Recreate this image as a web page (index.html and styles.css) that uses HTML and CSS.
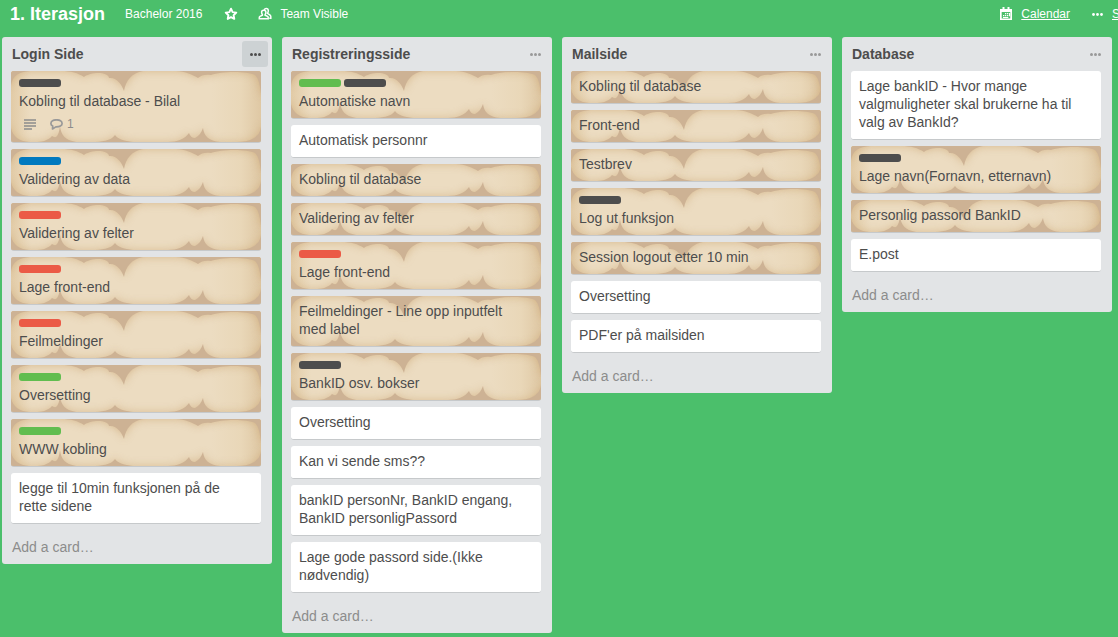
FILE: index.html
```html
<!DOCTYPE html>
<html lang="no">
<head>
<meta charset="utf-8">
<meta name="viewport" content="width=device-width, initial-scale=1">
<title>1. Iterasjon</title>
<link rel="stylesheet" href="styles.css">
</head>
<body>
<header class="board-header">
  <h1 class="board-name">1. Iterasjon</h1>
  <a class="board-link board-org" href="#">Bachelor 2016</a>
  <button class="icon-btn" type="button" aria-label="Star board">
    <svg width="14" height="14" viewBox="0 0 14 14"><path d="M7 1.700l1.600 3.400 3.700.5-2.700 2.600.7 3.700L7 10.100l-3.300 1.800.7-3.700L1.700 5.600l3.700-.5z" fill="none" stroke="#fff" stroke-width="1.900" stroke-linejoin="round"/></svg>
  </button>
  <button class="board-btn" type="button">
    <svg width="14" height="14" viewBox="0 0 14 14"><path d="M6.200 3C6.600 1.900 7.300 1.500 8.200 1.500c1.300 0 2.100.9 2.100 2.200 0 1-.3 1.900-.8 2.600l2.600 1.800c.5.400.7.900.7 1.500v1.600h-1.500" fill="none" stroke="#fff" stroke-width="1.500"/><path d="M5.700 3.200c-1.300 0-2.100.8-2.100 2.100 0 1 .3 1.600.8 2.200v.7L2 9.300c-.5.300-.7.600-.7 1.200v1.300h8.900v-1.300c0-.6-.2-.9-.7-1.200L7.100 8.200v-.7c.5-.6.8-1.200.8-2.200 0-1.300-.9-2.100-2.200-2.100z" fill="none" stroke="#fff" stroke-width="1.500"/></svg>
    <span>Team Visible</span>
  </button>
  <nav class="board-tools">
    <a class="board-tool" href="#">
      <svg width="14" height="14" viewBox="0 0 14 14"><path d="M1 2h12v11H1z M2.700 5v6.400h8.600V5z" fill="#fff" fill-rule="evenodd"/><path d="M3.500 0h2v3.500h-2z M8.500 0h2v3.500h-2z" fill="#fff"/><path d="M6 6h1.300v1.300H6z M8 6h1.300v1.300H8z M4 8h1.300v1.300H4z M6 8h1.300v1.300H6z M8 8h1.300v1.300H8z M10 6h1v3.300h-1z M4 10h5.300v1H4z" fill="#fff"/></svg>
      <span class="tool-text">Calendar</span>
    </a>
    <a class="board-tool board-menu" href="#">
      <svg width="11" height="3" viewBox="0 0 11 3"><g fill="#fff"><circle cx="1.500" cy="1.500" r="1.400"/><circle cx="5.500" cy="1.500" r="1.400"/><circle cx="9.500" cy="1.500" r="1.400"/></g></svg>
      <span class="tool-text">Show Menu</span>
    </a>
  </nav>
</header>

<main class="board">
  <section class="list">
    <header class="list-header">
      <h2 class="list-title">Login Side</h2>
      <button class="list-menu active" type="button" aria-label="List actions"><i class="dot"></i><i class="dot"></i><i class="dot"></i></button>
    </header>
    <div class="cards">
      <article class="card paper">
        <div class="labels"><span class="label black"></span></div>
        <p class="card-title">Kobling til database - Bilal</p>
        <div class="badges">
          <svg width="12" height="11" viewBox="0 0 12 11"><path d="M0 1h12M0 4h12M0 7h12M0 10h8" stroke="#8c8c8c" stroke-width="1.600"/></svg>
          <span class="badge">
            <svg width="13" height="11" viewBox="0 0 13 11"><path d="M6.500.8C3.300.8.9 2.300.9 4.400c0 1.200.7 2.100 1.800 2.700L2.500 10l3.300-2.100c3.800.2 6.300-1.300 6.300-3.500C12.100 2.300 9.700.8 6.500.8z" fill="none" stroke="#999" stroke-width="1.700" stroke-linejoin="round"/></svg>
            <span>1</span>
          </span>
        </div>
      </article>
      <article class="card paper"><div class="labels"><span class="label blue"></span></div><p class="card-title">Validering av data</p></article>
      <article class="card paper"><div class="labels"><span class="label red"></span></div><p class="card-title">Validering av felter</p></article>
      <article class="card paper"><div class="labels"><span class="label red"></span></div><p class="card-title">Lage front-end</p></article>
      <article class="card paper"><div class="labels"><span class="label red"></span></div><p class="card-title">Feilmeldinger</p></article>
      <article class="card paper"><div class="labels"><span class="label green"></span></div><p class="card-title">Oversetting</p></article>
      <article class="card paper"><div class="labels"><span class="label green"></span></div><p class="card-title">WWW kobling</p></article>
      <article class="card"><p class="card-title">legge til 10min funksjonen på de rette sidene</p></article>
    </div>
    <button class="add-card" type="button">Add a card…</button>
  </section>

  <section class="list">
    <header class="list-header">
      <h2 class="list-title">Registreringsside</h2>
      <button class="list-menu" type="button" aria-label="List actions"><i class="dot"></i><i class="dot"></i><i class="dot"></i></button>
    </header>
    <div class="cards">
      <article class="card paper"><div class="labels"><span class="label green"></span><span class="label black"></span></div><p class="card-title">Automatiske navn</p></article>
      <article class="card"><p class="card-title">Automatisk personnr</p></article>
      <article class="card paper"><p class="card-title">Kobling til database</p></article>
      <article class="card paper"><p class="card-title">Validering av felter</p></article>
      <article class="card paper"><div class="labels"><span class="label red"></span></div><p class="card-title">Lage front-end</p></article>
      <article class="card paper"><p class="card-title">Feilmeldinger - Line opp inputfelt med label</p></article>
      <article class="card paper"><div class="labels"><span class="label black"></span></div><p class="card-title">BankID osv. bokser</p></article>
      <article class="card"><p class="card-title">Oversetting</p></article>
      <article class="card"><p class="card-title">Kan vi sende sms??</p></article>
      <article class="card"><p class="card-title">bankID personNr, BankID engang, BankID personligPassord</p></article>
      <article class="card"><p class="card-title">Lage gode passord side.(Ikke nødvendig)</p></article>
    </div>
    <button class="add-card" type="button">Add a card…</button>
  </section>

  <section class="list">
    <header class="list-header">
      <h2 class="list-title">Mailside</h2>
      <button class="list-menu" type="button" aria-label="List actions"><i class="dot"></i><i class="dot"></i><i class="dot"></i></button>
    </header>
    <div class="cards">
      <article class="card paper"><p class="card-title">Kobling til database</p></article>
      <article class="card paper"><p class="card-title">Front-end</p></article>
      <article class="card paper"><p class="card-title">Testbrev</p></article>
      <article class="card paper"><div class="labels"><span class="label black"></span></div><p class="card-title">Log ut funksjon</p></article>
      <article class="card paper"><p class="card-title">Session logout etter 10 min</p></article>
      <article class="card"><p class="card-title">Oversetting</p></article>
      <article class="card"><p class="card-title">PDF'er på mailsiden</p></article>
    </div>
    <button class="add-card" type="button">Add a card…</button>
  </section>

  <section class="list">
    <header class="list-header">
      <h2 class="list-title">Database</h2>
      <button class="list-menu" type="button" aria-label="List actions"><i class="dot"></i><i class="dot"></i><i class="dot"></i></button>
    </header>
    <div class="cards">
      <article class="card"><p class="card-title">Lage bankID - Hvor mange valgmuligheter skal brukerne ha til valg av BankId?</p></article>
      <article class="card paper"><div class="labels"><span class="label black"></span></div><p class="card-title">Lage navn(Fornavn, etternavn)</p></article>
      <article class="card paper"><p class="card-title">Personlig passord BankID</p></article>
      <article class="card"><p class="card-title">E.post</p></article>
    </div>
    <button class="add-card" type="button">Add a card…</button>
  </section>
</main>
</body>
</html>
```

FILE: styles.css
```css
* { box-sizing: border-box; }

body {
  margin: 0;
  min-height: 100vh;
  overflow: hidden;
  background: #4bbf6b;
  color: #4d4d4d;
  font: 14px/18px "Liberation Sans", Arial, sans-serif;
}

h1, h2, p { margin: 0; }

button {
  margin: 0;
  padding: 0;
  border: 0;
  background: none;
  color: inherit;
  font: inherit;
  cursor: pointer;
}

svg { display: block; flex: none; }

/* Board header */
.board-header {
  display: flex;
  align-items: center;
  height: 28px;
  padding-left: 10px;
  color: #fff;
  font-size: 12px;
  white-space: nowrap;
  overflow: hidden;
}

.board-name { font-size: 18px; line-height: 28px; }
.board-link { color: #fff; text-decoration: none; }
.board-org { margin-left: 20px; }
.icon-btn { margin-left: 22px; }

.board-btn {
  display: flex;
  align-items: center;
  gap: 8px;
  margin-left: 20px;
}

.board-tools {
  display: flex;
  gap: 22px;
  margin-left: auto;
}

.board-tool {
  display: flex;
  align-items: center;
  gap: 8px;
  color: #fff;
  text-decoration: none;
}

.tool-text { text-decoration: underline; }
.board-menu { width: 26px; gap: 9px; }

/* Lists */
.board {
  display: flex;
  align-items: flex-start;
  gap: 10px;
  padding: 9px 2px 4px;
}

.list {
  flex: 0 0 270px;
  background: #e2e4e6;
  border-radius: 3px;
}

.list-header {
  display: flex;
  align-items: center;
  height: 34px;
  padding: 0 4px 0 10px;
}

.list-title {
  flex: 1;
  font-size: 14px;
  line-height: 18px;
}

.list-menu {
  display: flex;
  align-items: center;
  justify-content: center;
  gap: 1px;
  width: 26px;
  height: 26px;
  border-radius: 3px;
  color: #999;
}

.list-menu.active { background: #cdd2d4; color: #4d4d4d; }

.dot {
  width: 3px;
  height: 3px;
  border-radius: 50%;
  background: currentColor;
}

.cards {
  display: grid;
  gap: 6px;
  padding: 0 11px 0 9px;
}

/* Cards */
.card {
  padding: 6px 12px 8px 8px;
  border-bottom: 1px solid #c6c9cb;
  border-radius: 3px;
  background: #fff;
}

.paper {
  background-color: #ecdcc1;
  background-repeat: no-repeat;
  background-position: left top, left bottom, center;
  background-size: 250px 34px, 250px 34px, 100% 100%;
  background-image:
    url("data:image/svg+xml,%3Csvg xmlns='http://www.w3.org/2000/svg' width='250' height='34'%3E%3Cdefs%3E%3Cfilter id='b' x='-20' y='-20' width='290' height='70' filterUnits='userSpaceOnUse'%3E%3CfeGaussianBlur stdDeviation='4'/%3E%3C/filter%3E%3Cpath id='p' d='M-9-9H259V23H250C249 15 248 8 244 4C236 0 211 0 200 4C195 3 190 4 187 7C182 4 174 0 165 0H132C121 2 115 9 113 20C111 14 106 6 98 7C97 0 79 1 73 6C67 2 60 0 50 0H19C8 1 2 4 0 14H-9Z'/%3E%3C/defs%3E%3Cuse href='%23p' fill='%23cda978' opacity='.7' filter='url(%23b)'/%3E%3Cuse href='%23p' fill='%23cdb294'/%3E%3C/svg%3E"),
    url("data:image/svg+xml,%3Csvg xmlns='http://www.w3.org/2000/svg' width='250' height='34'%3E%3Cdefs%3E%3Cfilter id='b' x='-20' y='-20' width='290' height='75' filterUnits='userSpaceOnUse'%3E%3CfeGaussianBlur stdDeviation='4'/%3E%3C/filter%3E%3Cpath id='p' d='M-9 43H259V19H250C249 25 247 27 243 30C238 33 232 34 225 34H209C198 33 193 28 192 20C190 25 188 28 184 30C181 30 179 28 178 25C174 31 166 34 157 34H122C113 33 107 31 104 27C100 33 90 34 81 34H65C54 32 50 27 49 18C48 26 46 30 43 29L41 28C37 33 30 34 24 34H18C8 33 2 29 0 20H-9Z'/%3E%3C/defs%3E%3Cuse href='%23p' fill='%23cda978' opacity='.6' filter='url(%23b)'/%3E%3Cuse href='%23p' fill='%23cdb294'/%3E%3C/svg%3E"),
    linear-gradient(90deg, #e2cba6, #ecdcc1 20px, #ecdcc1 calc(100% - 50px), #e9d7b8 calc(100% - 20px), #dfc8a4);
}

.labels {
  display: flex;
  gap: 3px;
  padding: 2px 0 5px;
}

.label {
  width: 42px;
  height: 8px;
  border-radius: 3px;
}

.black { background: #4d4d4d; }
.blue { background: #0079bf; }
.red { background: #eb5a46; }
.green { background: #61bd4f; }

.badges {
  display: flex;
  align-items: center;
  gap: 14px;
  height: 24px;
  padding: 4px 5px 0;
  color: #8c8c8c;
  font-size: 12px;
}

.badge {
  display: flex;
  align-items: center;
  gap: 4px;
}

.add-card {
  display: block;
  width: 100%;
  padding: 14px 10px 8px;
  color: #8c8c8c;
  text-align: left;
}
```
